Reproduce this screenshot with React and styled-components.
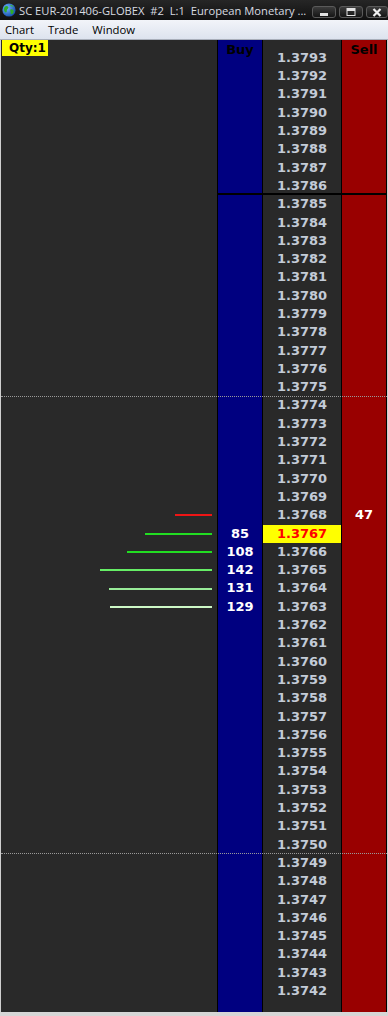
import React from "react";
import styled, { createGlobalStyle } from "styled-components";

const GlobalStyle = createGlobalStyle`
  html, body {
    margin: 0;
    padding: 0;
    background: #292929;
  }
  body {
    font-family: "DejaVu Sans", sans-serif;
  }
`;

// price ladder data, 1.3793 down to 1.3742
const prices = [];
for (let p = 3793; p >= 3742; p--) prices.push(p);

const buyQty = { 3767: 85, 3766: 108, 3765: 142, 3764: 131, 3763: 129 };
const sellQty = { 3768: 47 };
const depthBars = {
  3768: { qty: 47, color: "#ee1515" },
  3767: { qty: 85, color: "#22dd22" },
  3766: { qty: 108, color: "#22dd22" },
  3765: { qty: 142, color: "#66ee66" },
  3764: { qty: 131, color: "#99ec99" },
  3763: { qty: 129, color: "#cdf8c6" },
};
const CURRENT = 3767;
const SOLID_AFTER = 3786;
const DOTTED_AFTER = [3775, 3750];

const Globe = () => (
  <svg width="14" height="14" viewBox="0 0 14 14">
    <defs>
      <radialGradient id="g" cx="0.35" cy="0.35" r="0.8">
        <stop offset="0" stopColor="#6fb4ff" />
        <stop offset="1" stopColor="#0a3f9e" />
      </radialGradient>
    </defs>
    <circle cx="7" cy="7" r="6.6" fill="url(#g)" />
    <path d="M3 3.5 C4.5 2.5 6 3 6.5 4.5 C6 6 4.5 6.5 4.8 8 C5 9.5 3.5 10 2.5 8.5 C1.5 7 2 4.5 3 3.5 Z" fill="#2faa2a" />
    <path d="M8.5 6.5 C10 6 11.5 7 11.8 8.5 C11.5 10.5 10 11.5 9 11 C8.2 10 9 9 8.2 8 Z" fill="#2faa2a" />
    <path d="M8 2 C9.5 1.8 11 2.5 11.5 3.5 C10.5 4 9 3.5 8 2 Z" fill="#3fbb35" />
  </svg>
);

const App = () => {
  return (
    <>
      <GlobalStyle />
      <Window>
        <TitleBar>
          <Globe />
          <TitleText>SC EUR-201406-GLOBEX  #2  L:1  European Monetary ...</TitleText>
          <WinButtons>
            <WinButton $w={24}>
              <svg width="10" height="8" viewBox="0 0 10 8">
                <rect x="1" y="5" width="8" height="3" fill="#e4e4e4" />
              </svg>
            </WinButton>
            <WinButton $w={24}>
              <svg width="10" height="8" viewBox="0 0 10 8">
                <rect x="1" y="0.5" width="8" height="7" fill="none" stroke="#e4e4e4" strokeWidth="1" />
                <rect x="1" y="0.5" width="8" height="2.5" fill="#e4e4e4" />
              </svg>
            </WinButton>
            <WinButton $w={22}>
              <svg width="10" height="9" viewBox="0 0 10 9">
                <path d="M1.5 1 L8.5 8 M8.5 1 L1.5 8" stroke="#f0f0f0" strokeWidth="2.2" />
              </svg>
            </WinButton>
          </WinButtons>
        </TitleBar>

        <MenuBar>
          <MenuItem>Chart</MenuItem>
          <MenuItem>Trade</MenuItem>
          <MenuItem>Window</MenuItem>
        </MenuBar>

        <Chart>
          <QtyBadge>Qty:1</QtyBadge>

          <HeaderRow>
            <DepthCell />
            <BuyCell>
              <HeaderLabel>Buy</HeaderLabel>
            </BuyCell>
            <PriceCell />
            <SellCell>
              <HeaderLabel>Sell</HeaderLabel>
            </SellCell>
          </HeaderRow>

          {prices.map((p) => {
            const bar = depthBars[p];
            return (
              <Row
                key={p}
                $solid={p === SOLID_AFTER}
                $dotted={DOTTED_AFTER.includes(p)}
              >
                <DepthCell>
                  {bar && (
                    <DepthBar $color={bar.color} style={{ width: Math.round(bar.qty * 0.79) }} />
                  )}
                </DepthCell>
                <BuyCell>{buyQty[p]}</BuyCell>
                <PriceCell $current={p === CURRENT}>1.{p}</PriceCell>
                <SellCell>{sellQty[p]}</SellCell>
              </Row>
            );
          })}

          <FillerRow>
            <DepthCell />
            <BuyCell />
            <PriceCell />
            <SellCell />
          </FillerRow>
        </Chart>

        <BottomFrame />
      </Window>
    </>
  );
};

const Window = styled.div`
  width: 388px;
  height: 1016px;
  display: flex;
  flex-direction: column;
  overflow: hidden;
`;

const TitleBar = styled.div`
  height: 20px;
  display: flex;
  align-items: center;
  padding-left: 2px;
  background: linear-gradient(#262626, #101010);

  svg {
    flex-shrink: 0;
  }
`;

const TitleText = styled.span`
  margin-left: 3px;
  font-family: "Open Sans", sans-serif;
  font-size: 11.2px;
  color: #d8dbe0;
  white-space: pre;
  overflow: hidden;
`;

const WinButtons = styled.div`
  margin-left: auto;
  display: flex;
  gap: 3px;
  align-self: flex-start;
  padding-top: 6px;
`;

const WinButton = styled.div`
  width: ${(p) => p.$w}px;
  height: 12px;
  box-sizing: border-box;
  border: 1px solid #5a5a5a;
  border-radius: 3px;
  background: linear-gradient(#3c3c3c, #151515);
  display: flex;
  align-items: center;
  justify-content: center;
`;

const MenuBar = styled.div`
  height: 19px;
  display: flex;
  align-items: center;
  gap: 14px;
  padding-left: 5px;
  background: linear-gradient(#f2f4f9, #dde3ee);
  border-bottom: 1px solid #a9afba;
`;

const MenuItem = styled.span`
  font-family: "Open Sans", sans-serif;
  font-size: 11.3px;
  color: #000;
`;

const Chart = styled.div`
  flex: 1;
  position: relative;
  display: flex;
  flex-direction: column;
  background: #292929;
  border-left: 1px solid #cfcfcf;
  border-right: 1px solid #cfcfcf;
`;

const QtyBadge = styled.div`
  position: absolute;
  top: 0;
  left: 1px;
  z-index: 2;
  width: 46px;
  height: 16px;
  box-sizing: border-box;
  padding-left: 7px;
  background: #ffff00;
  color: #000;
  font-weight: bold;
  font-size: 12px;
  line-height: 16px;
`;

const gridRow = `
  display: grid;
  grid-template-columns: 216px 45px 79px 46px;
`;

const HeaderRow = styled.div`
  ${gridRow}
  height: 8.85px;
  flex-shrink: 0;
`;

const Row = styled.div`
  ${gridRow}
  height: 18.3px;
  flex-shrink: 0;
  position: relative;

  &::after {
    content: "";
    position: absolute;
    z-index: 1;
    display: ${(p) => (p.$solid || p.$dotted ? "block" : "none")};
    left: ${(p) => (p.$solid ? "216px" : "0")};
    right: 0;
    bottom: ${(p) => (p.$solid ? "0" : "-0.5px")};
    height: ${(p) => (p.$solid ? "2px" : "0")};
    background: ${(p) => (p.$solid ? "#000" : "none")};
    border-top: ${(p) => (p.$dotted ? "1px dotted #9a9a9a" : "none")};
  }
`;

const FillerRow = styled.div`
  ${gridRow}
  flex: 1;
`;

const cellText = `
  font-weight: bold;
  font-size: 13px;
  line-height: 18.3px;
  text-align: center;
  white-space: nowrap;
`;

const DepthCell = styled.div`
  display: flex;
  align-items: center;
  justify-content: flex-end;
  padding-right: 5px;
`;

const DepthBar = styled.div`
  height: 2px;
  background: ${(p) => p.$color};
`;

const BuyCell = styled.div`
  ${cellText}
  background: #000080;
  border-left: 1px solid #000;
  color: #ffffff;
`;

const PriceCell = styled.div`
  ${cellText}
  background: ${(p) => (p.$current ? "#ffff00" : "#292929")};
  border-left: 1px solid #000;
  color: ${(p) => (p.$current ? "#ff0000" : "#c3cbd7")};
`;

const SellCell = styled.div`
  ${cellText}
  background: #990000;
  border-left: 1px solid #000;
  border-right: 1px solid #000;
  color: #ffffff;
`;

const HeaderLabel = styled.div`
  position: relative;
  z-index: 1;
  color: #000;
  line-height: 19px;
`;

const BottomFrame = styled.div`
  height: 4px;
  background: #d6d6d6;
`;

export default App;
